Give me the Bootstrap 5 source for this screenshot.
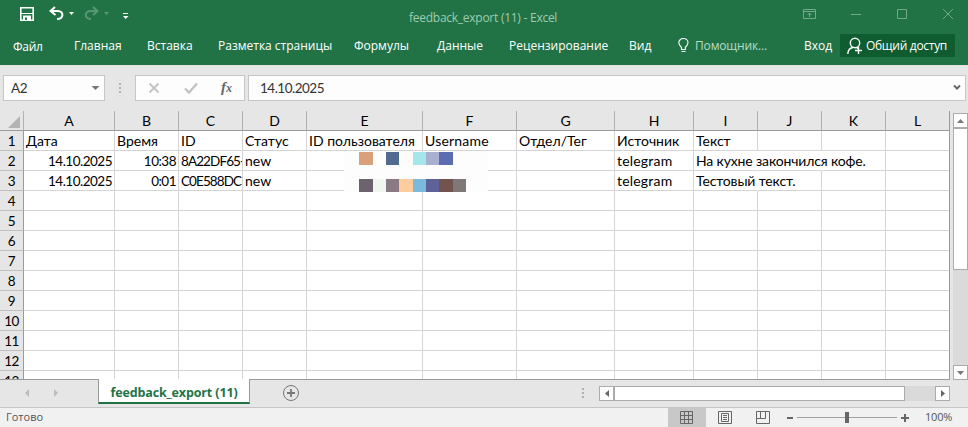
<!DOCTYPE html>
<html lang="ru">
<head>
<meta charset="utf-8">
<meta name="viewport" content="width=device-width, initial-scale=1">
<title>feedback_export (11) - Excel</title>
<link href="https://cdn.jsdelivr.net/npm/bootstrap@5.3.0/dist/css/bootstrap.min.css" rel="stylesheet">
<style>
body{width:968px;height:427px;background:#e6e6e6;font-family:"Open Sans","Noto Sans",sans-serif;font-size:12px;line-height:16px;color:#000}
svg{display:block;flex:none}
.xl-top{background:#217346;height:65px;color:#fff}
.xl-title{height:29px;display:grid;grid-template-columns:20px 29px 35px 37px 288px 394px 46px 46px 46px 27px}
.xl-title .nm{color:#9fcbb0;padding-top:10px;letter-spacing:-.26px;white-space:nowrap}
.xl-menu{height:36px;display:grid;grid-template-columns:61px 73px 71px 136px 83px 72px 120px 49px 17px 109px 36px 115px;padding-left:13px;white-space:nowrap}
.xl-menu>*{padding-top:9px}
.xl-menu>:first-child{padding-top:10px;letter-spacing:-.3px}
.xl-menu .bulb{padding:0}
.xl-menu .helper{color:#b8dcc6;letter-spacing:-.15px}
.xl-menu .share{background:#0e5c2f;height:23px;margin-top:5px;padding:0 0 0 7px;letter-spacing:-.3px}
.fx-row{height:46px;padding:10px 2px 0 3px}
.fx-box{height:26px;background:#fdfdfd;border:1px solid #c6c6c6}
.fx-box.calc{color:#333}
.fx-main{margin-left:3px}
.name-box{width:102px}
.name-box span{padding-left:7px}
.fx-main span{padding-left:11px}
.fx-btns{width:110px}
.calc{font-family:Lato,"Open Sans",sans-serif;font-size:14px;line-height:19px}
.sheet{width:950px;height:269px;overflow:hidden;position:relative;background:#fff;border-right:1px solid #9b9b9b;border-bottom:1px solid #9b9b9b}
.sheet .ln{display:grid;grid-template-columns:24px 91px 64px 64px 64px 116px 94px 98px 79px 64px 64px 64px 64px;height:20px}
.ln>*{border-right:1px solid #d4d4d4;border-bottom:1px solid #d4d4d4;white-space:nowrap;overflow:hidden;padding:0 2px;min-width:0}
.ln>:first-child{background:#e6e6e6;border-right-color:#9b9b9b;border-bottom-color:#c0c0c0;text-align:center;padding-left:0;padding-right:0}
.ln.hd>*{background:#e6e6e6;border-right-color:#b1b1b1;border-bottom-color:#9b9b9b;text-align:center}
.num,.ln>:first-child{font-size:13.5px;letter-spacing:-.5px}
.ln .code{font-size:13.5px;letter-spacing:-.9px}
.ln .num,.ln .code,.ln>:first-child{line-height:21px}
.ln .spill{overflow:visible;border-right-color:transparent;letter-spacing:-.15px}
.ln .bare{border-right-color:transparent}
.ln .rt{text-align:right}
.ln .wide{letter-spacing:.2px}
.mosaic{position:absolute;left:344px;top:41px;width:144px;height:40px;background:#fdfdfd;padding-left:15px}
.mosaic .r{display:grid;grid-template-columns:14px 13px 13px 14px 13px 13px 14px 13px;height:13px}
.m1 :nth-child(1){background:#d9a07a}.m1 :nth-child(2){background:#fefefb}.m1 :nth-child(3){background:#506b8f}.m1 :nth-child(4){background:#fdfcf9}.m1 :nth-child(5){background:#a5e6ea}.m1 :nth-child(6){background:#a9b0cf}.m1 :nth-child(7){background:#5b6dae}
.m2 :nth-child(1){background:#6d636e}.m2 :nth-child(2){background:#f0f5ef}.m2 :nth-child(3){background:#8a7a83}.m2 :nth-child(4){background:#ffcc9d}.m2 :nth-child(5){background:#7bb9dd}.m2 :nth-child(6){background:#5e6297}.m2 :nth-child(7){background:#71544d}.m2 :nth-child(8){background:#7e7878}
.vbar{width:15px;margin-left:3px;height:267px;margin-top:2px;background:#dadada}
.vbar .sbtn{height:15px}
.vbar .thumb{height:142px}
.hbar{width:351px;height:15px;margin-top:6px;background:#dadada}
.hbar .sbtn{width:15px}
.hbar .thumb{width:291px}
.sbtn{background:#fff;border:1px solid #ababab;display:flex;align-items:center;justify-content:center}
.tabs-row{height:27px}
.tab-on{width:152px;height:25px;margin-top:-1px;background:#fff;border:1px solid #9b9b9b;border-top:0;border-bottom:2px solid #217346;color:#217346;font-weight:700;text-align:center;padding-top:6px;position:relative;font-size:12.5px;letter-spacing:-.13px}
.status{height:20px;background:#f1f1f1;border-top:1px solid #c6c6c6;color:#555;font-size:11px}
.status span{padding-top:1px}
.status .ready{width:668px;padding-left:6px}
.status .zoom-pct{letter-spacing:-.2px}
</style>
</head>
<body class="overflow-hidden">
<header class="xl-top">
  <div class="xl-title">
    <span></span>
    <svg width="16" height="29"><path d="M.8 7.800h12.400v12.400H.8z" fill="none" stroke="#fff" stroke-width="1.600"/><path d="M1 13.500h12" stroke="#fff"/><path d="M3 15.500h8V21H3z" fill="#fff"/><path d="M5 17.500h2V20H5z" fill="#217346"/></svg>
    <svg width="30" height="29"><path d="M6 7L1.500 11l5 4M2 11h7c6 0 6 8-1 8" fill="none" stroke="#fff" stroke-width="2"/><path d="M20 12h5l-2.500 3z" fill="#fff"/></svg>
    <svg width="30" height="29" opacity=".25"><path d="M9 7l4.500 4L9 15M13 11H7c-7 0-7 8 0 8" fill="none" stroke="#fff" stroke-width="2"/><path d="M20 12h5l-2.500 3z" fill="#fff"/></svg>
    <svg width="12" height="29"><path d="M2 13.500h5" stroke="#fff"/><path d="M2 16h5.500l-2.800 3z" fill="#fff"/></svg>
    <span class="nm">feedback_export (11) - Excel</span>
    <svg width="14" height="29" fill="none" stroke="#72a98a"><path d="M.5 9.500h12v9H.5zM.5 11.500h12M6.500 17v-4M4.500 15l2-2 2 2"/></svg>
    <svg width="14" height="29" stroke="#72a98a"><path d="M2 14.500h10"/></svg>
    <svg width="14" height="29" fill="none" stroke="#72a98a"><path d="M2.500 9.500h9v9h-9z"/></svg>
    <svg width="14" height="29" fill="none" stroke="#72a98a"><path d="M2 9l10 10M12 9L2 19"/></svg>
  </div>
  <nav class="xl-menu">
    <span>Файл</span><span>Главная</span><span>Вставка</span><span>Разметка страницы</span><span>Формулы</span><span>Данные</span><span>Рецензирование</span><span>Вид</span>
    <svg class="bulb" width="12" height="28" viewBox="0 -9 12 28" overflow="visible" fill="none" stroke="#fff" stroke-width="1.100"><path d="M3.500 11.500V9.500C1.500 7.500.8 6.500.8 4.800a4.600 4.300 0 0 1 9.200 0C10 6.500 9.300 7.500 7.300 9.500v2zM3.500 13.500h4"/></svg>
    <span class="helper">Помощник...</span><span>Вход</span>
    <span class="share d-flex align-items-center"><svg width="19" height="20" fill="none" stroke="#fff" stroke-width="1.400"><circle cx="8" cy="7" r="4.700"/><path d="M.8 18c.2-4 2-6 5-6.500M9.500 11.500l1.500 1M11.500 11v7M8 14.500h7"/></svg><span>Общий доступ</span></span>
  </nav>
</header>
<div class="fx-row d-flex">
  <div class="fx-box name-box calc d-flex align-items-center justify-content-between"><span class="num">A2</span><svg width="14" height="8"><path d="M1.500 2h8L5.500 6z" fill="#777"/></svg></div>
  <svg width="30" height="26"><path d="M14 8h2v2h-2zM14 12h2v2h-2zM14 16h2v2h-2z" fill="#b0b0b0"/></svg>
  <div class="fx-box fx-btns"><svg width="108" height="24" fill="none"><path d="M13.500 7.500l9 9M22.500 7.500l-9 9" stroke="#c3c3c3" stroke-width="1.800"/><path d="M49 12.500l4 4 8-9" stroke="#c3c3c3" stroke-width="2.400"/><text x="85" y="16" fill="#666" font-family="Liberation Serif" font-size="15" font-style="italic" font-weight="700">f</text><text x="90" y="16" fill="#666" font-family="Liberation Serif" font-size="12" font-style="italic" font-weight="700">x</text></svg></div>
  <div class="fx-box fx-main calc d-flex align-items-center justify-content-between flex-grow-1"><span class="num">14.10.2025</span><svg width="14" height="8"><path d="M3 1.500l3 3 3-3" fill="none" stroke="#666" stroke-width="2"/></svg></div>
</div>
<main class="d-flex">
  <div class="sheet calc">
    <div class="ln hd"><div><svg width="23" height="19"><path d="M20 5v12H8z" fill="#b3b3b3"/></svg></div><div>A</div><div>B</div><div>C</div><div>D</div><div>E</div><div>F</div><div>G</div><div>H</div><div>I</div><div>J</div><div>K</div><div>L</div></div>
    <div class="ln"><div>1</div><div>Дата</div><div>Время</div><div>ID</div><div>Статус</div><div>ID пользователя</div><div class="wide">Username</div><div>Отдел/Тег</div><div>Источник</div><div>Текст</div><div></div><div></div><div></div></div>
    <div class="ln"><div>2</div><div class="rt num">14.10.2025</div><div class="rt num">10:38</div><div class="code">8A22DF65-</div><div>new</div><div></div><div></div><div></div><div class="wide">telegram</div><div class="spill">На кухне закончился кофе.</div><div class="bare"></div><div></div><div></div></div>
    <div class="ln"><div>3</div><div class="rt num">14.10.2025</div><div class="rt num">0:01</div><div class="code">C0E588DC-</div><div>new</div><div></div><div></div><div></div><div class="wide">telegram</div><div class="spill">Тестовый текст.</div><div></div><div></div><div></div></div>
    <div class="ln"><div>4</div><div></div><div></div><div></div><div></div><div></div><div></div><div></div><div></div><div></div><div></div><div></div><div></div></div>
    <div class="ln"><div>5</div><div></div><div></div><div></div><div></div><div></div><div></div><div></div><div></div><div></div><div></div><div></div><div></div></div>
    <div class="ln"><div>6</div><div></div><div></div><div></div><div></div><div></div><div></div><div></div><div></div><div></div><div></div><div></div><div></div></div>
    <div class="ln"><div>7</div><div></div><div></div><div></div><div></div><div></div><div></div><div></div><div></div><div></div><div></div><div></div><div></div></div>
    <div class="ln"><div>8</div><div></div><div></div><div></div><div></div><div></div><div></div><div></div><div></div><div></div><div></div><div></div><div></div></div>
    <div class="ln"><div>9</div><div></div><div></div><div></div><div></div><div></div><div></div><div></div><div></div><div></div><div></div><div></div><div></div></div>
    <div class="ln"><div>10</div><div></div><div></div><div></div><div></div><div></div><div></div><div></div><div></div><div></div><div></div><div></div><div></div></div>
    <div class="ln"><div>11</div><div></div><div></div><div></div><div></div><div></div><div></div><div></div><div></div><div></div><div></div><div></div><div></div></div>
    <div class="ln"><div>12</div><div></div><div></div><div></div><div></div><div></div><div></div><div></div><div></div><div></div><div></div><div></div><div></div></div>
    <div class="ln"><div>13</div><div></div><div></div><div></div><div></div><div></div><div></div><div></div><div></div><div></div><div></div><div></div><div></div></div>
    <div class="mosaic d-flex flex-column justify-content-between"><div class="r m1"><i></i><i></i><i></i><i></i><i></i><i></i><i></i></div><div class="r m2"><i></i><i></i><i></i><i></i><i></i><i></i><i></i><i></i></div></div>
  </div>
  <div class="vbar d-flex flex-column"><div class="sbtn"><svg width="7" height="4"><path d="M0 4h7L3.500 0z" fill="#777"/></svg></div><div class="sbtn thumb"></div><div class="sbtn mt-auto"><svg width="7" height="4"><path d="M0 0h7L3.500 4z" fill="#777"/></svg></div></div>
</main>
<div class="tabs-row d-flex">
  <svg width="98" height="27"><path d="M29 9v8l-4-4zM54 9v8l4-4z" fill="#bdbdbd"/></svg>
  <div class="tab-on">feedback_export (11)</div>
  <svg width="349" height="27" fill="none"><circle cx="41" cy="13" r="7.500" stroke="#777"/><path d="M37 13h8M41 9v8" stroke="#777" stroke-width="1.800"/><path d="M332 8h2v2h-2zM332 12h2v2h-2zM332 16h2v2h-2z" fill="#b0b0b0"/></svg>
  <div class="hbar d-flex"><div class="sbtn"><svg width="4" height="7"><path d="M4 0v7L0 3.500z" fill="#666"/></svg></div><div class="sbtn thumb"></div><div class="sbtn ms-auto"><svg width="4" height="7"><path d="M0 0v7l4-3.500z" fill="#666"/></svg></div></div>
</div>
<footer class="status d-flex">
  <span class="ready">Готово</span>
  <svg width="257" height="19" fill="none" stroke="#666"><path d="M0 0h38v19H0z" fill="#c8c8c8" stroke="none"/><path d="M12.500 3.500h12v12h-12zM16.500 3.500v12M20.500 3.500v12M12.500 7.500h12M12.500 11.500h12M50.500 3.500h13v12h-13zM53.500 5.500h7v8h-7zM55 7.500h4M55 9.500h4M55 11.500h4M88.500 3.500h13v12h-13zM92.500 3.500v7M97.500 3.500v7M88.500 10.500h9"/><path d="M119 10h6M233 10h8M237 6v8" stroke-width="2"/><path d="M129 9.500h100" stroke="#a0a0a0"/><path d="M177 4h4v11h-4z" fill="#666" stroke="none"/></svg>
  <span class="zoom-pct">100%</span>
</footer>
<script src="https://cdn.jsdelivr.net/npm/bootstrap@5.3.0/dist/js/bootstrap.bundle.min.js"></script>
</body>
</html>
